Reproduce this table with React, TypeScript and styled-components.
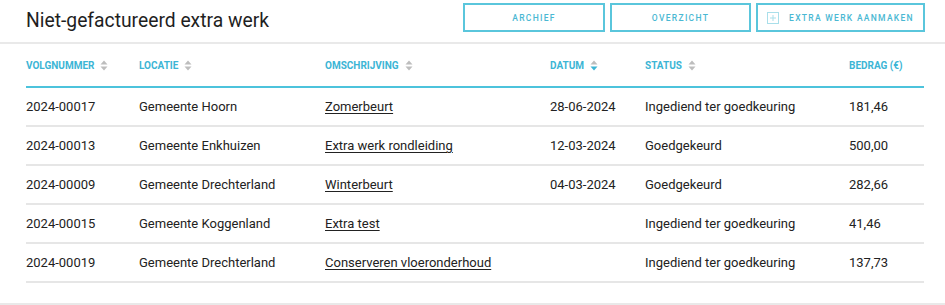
import styled, { createGlobalStyle } from "styled-components";

const GlobalStyle = createGlobalStyle`
  body {
    margin: 0;
    background: #ffffff;
    font-family: Roboto, "Liberation Sans", Arial, sans-serif;
    color: #222222;
  }
`;

const Page = styled.div`
  width: 945px;
  height: 305px;
  border-bottom: 2px solid #e9e9e9;
  box-sizing: border-box;
`;

const TopBar = styled.header`
  height: 44px;
  box-sizing: border-box;
  padding: 3px 20px 0 26px;
  display: flex;
  justify-content: space-between;
  align-items: flex-start;
  border-bottom: 2px solid #e9e9e9;
`;

const Title = styled.h1`
  margin: 6px 0 0;
  font-size: 19.3px;
  font-weight: 400;
  color: #1f1f1f;
`;

const Actions = styled.div`
  display: flex;
  gap: 5px;
`;

const ActionButton = styled.button<{ $width: number }>`
  width: ${(p) => p.$width}px;
  height: 29px;
  box-sizing: border-box;
  border: 2px solid #5ac6dc;
  background: #ffffff;
  color: #4ab8d3;
  font-family: Roboto, "Liberation Sans", Arial, sans-serif;
  font-size: 8.5px;
  font-weight: 500;
  letter-spacing: 1.3px;
  display: flex;
  align-items: center;
  justify-content: center;
  gap: 10px;
  padding: 0;
  cursor: pointer;
`;

const PlusBox = styled.span`
  width: 10px;
  height: 10px;
  border: 1px solid #a9dfea;
  position: relative;
  display: inline-block;

  &::before,
  &::after {
    content: "";
    position: absolute;
    background: #a9dfea;
    left: 50%;
    top: 50%;
    transform: translate(-50%, -50%);
  }
  &::before {
    width: 6px;
    height: 1px;
  }
  &::after {
    width: 1px;
    height: 6px;
  }
`;

const TableWrap = styled.div`
  padding: 0 21px 0 26px;
`;

const Table = styled.table`
  width: 898px;
  border-collapse: collapse;
  table-layout: fixed;
`;

const HeadCell = styled.th<{ $width: number }>`
  width: ${(p) => p.$width}px;
  height: 42px;
  padding: 0;
  text-align: left;
  font-size: 10px;
  font-weight: 700;
  color: #3cb5d5;
  border-bottom: 2px solid #4cc3dc;
  vertical-align: middle;
  white-space: nowrap;
`;

const HeadInner = styled.span`
  display: inline-flex;
  align-items: center;
  gap: 6px;
  padding-top: 1px;
`;

const Row = styled.tr`
  height: 39px;
  border-bottom: 2px solid #e6e6e6;
`;

const Cell = styled.td`
  padding: 0;
  font-size: 13px;
  color: #222222;
  vertical-align: middle;
  white-space: nowrap;
`;

const LinkText = styled.a`
  color: #222222;
  text-decoration: underline;
  text-underline-offset: 2px;
`;

function SortIcon({ active }: { active?: boolean }) {
  return (
    <svg width="8" height="11" viewBox="0 0 8 11">
      <path d="M4 0.5 L7.5 4.5 H0.5 Z" fill="#bdbdbd" />
      <path d="M4 10.5 L7.5 6.5 H0.5 Z" fill={active ? "#3cb5d5" : "#bdbdbd"} />
    </svg>
  );
}

const columns = [
  { label: "Volgnummer", width: 113, sort: true },
  { label: "Locatie", width: 186, sort: true },
  { label: "Omschrijving", width: 225, sort: true },
  { label: "Datum", width: 95, sort: true, active: true },
  { label: "Status", width: 204, sort: true },
  { label: "Bedrag (€)", width: 75, sort: false },
];

const rows = [
  ["2024-00017", "Gemeente Hoorn", "Zomerbeurt", "28-06-2024", "Ingediend ter goedkeuring", "181,46"],
  ["2024-00013", "Gemeente Enkhuizen", "Extra werk rondleiding", "12-03-2024", "Goedgekeurd", "500,00"],
  ["2024-00009", "Gemeente Drechterland", "Winterbeurt", "04-03-2024", "Goedgekeurd", "282,66"],
  ["2024-00015", "Gemeente Koggenland", "Extra test", "", "Ingediend ter goedkeuring", "41,46"],
  ["2024-00019", "Gemeente Drechterland", "Conserveren vloeronderhoud", "", "Ingediend ter goedkeuring", "137,73"],
];

export default function App() {
  return (
    <Page>
      <GlobalStyle />
      <TopBar>
        <Title>Niet-gefactureerd extra werk</Title>
        <Actions>
          <ActionButton $width={142}>ARCHIEF</ActionButton>
          <ActionButton $width={141}>OVERZICHT</ActionButton>
          <ActionButton $width={169}>
            <PlusBox />
            EXTRA WERK AANMAKEN
          </ActionButton>
        </Actions>
      </TopBar>

      <TableWrap>
        <Table>
          <thead>
            <tr>
              {columns.map((c) => (
                <HeadCell key={c.label} $width={c.width}>
                  <HeadInner>
                    {c.label.toUpperCase()}
                    {c.sort && <SortIcon active={c.active} />}
                  </HeadInner>
                </HeadCell>
              ))}
            </tr>
          </thead>
          <tbody>
            {rows.map((r) => (
              <Row key={r[0]}>
                <Cell>{r[0]}</Cell>
                <Cell>{r[1]}</Cell>
                <Cell>
                  <LinkText href="#">{r[2]}</LinkText>
                </Cell>
                <Cell>{r[3]}</Cell>
                <Cell>{r[4]}</Cell>
                <Cell>{r[5]}</Cell>
              </Row>
            ))}
          </tbody>
        </Table>
      </TableWrap>
    </Page>
  );
}
